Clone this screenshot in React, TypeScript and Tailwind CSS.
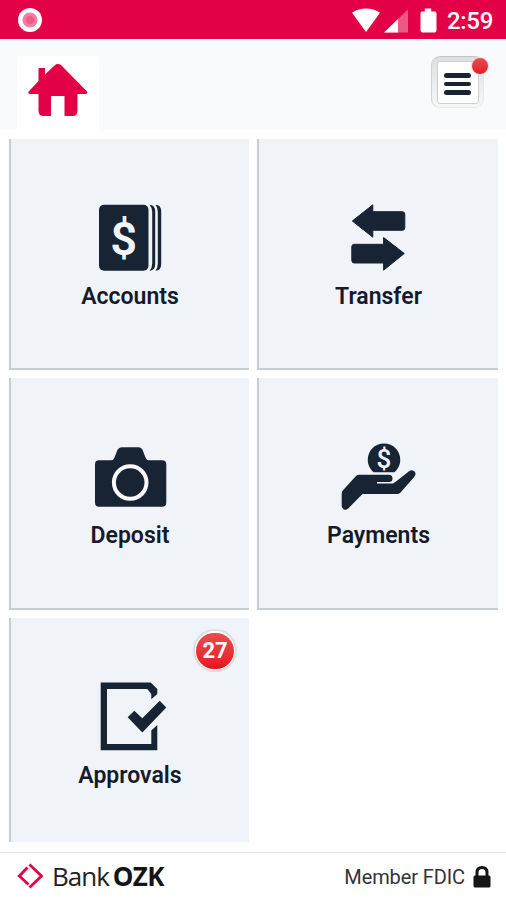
import { FunctionComponent, ReactNode } from "react";

const StatusBar: FunctionComponent = () => {
  return (
    <div className="flex h-[39px] items-center justify-between bg-[#E40046] pl-[18px] pr-[13px]">
      <svg width="24" height="24" viewBox="0 0 24 24">
        <circle cx="12" cy="12" r="12" fill="#fff" />
        <circle cx="12" cy="12" r="7.6" fill="#F27FA2" />
        <circle cx="12" cy="12" r="4.2" fill="#EE5C89" />
      </svg>
      <div className="flex items-center">
        <svg width="88" height="28" viewBox="0 0 88 28" fill="#fff">
          <path d="M2 6.8C10.5 1.2 21.500 1.200 30 6.800L16 26Z" />
          <path d="M58 3.500V26.500H34Z" opacity="0.35" />
          <path d="M48 13V26.500H34Z" />
          <path d="M72 5.500H74.800V2.500H81.200V5.500H84.500Q86.500 5.500 86.500 7.500V24.500Q86.500 26.500 84.500 26.500H72.500Q70.500 26.500 70.500 24.500V7.500Q70.500 5.500 72 5.500Z" />
        </svg>
        <span className="ml-[9px] pt-[3px] text-[24px] font-medium leading-9 tracking-[-0.3px] text-white">
          2:59
        </span>
      </div>
    </div>
  );
};

const Header: FunctionComponent = () => {
  return (
    <header className="mt-px flex h-[90px] items-end justify-between bg-[#F8FAFB] pl-[17px] pr-[22px]">
      <button className="flex h-[74px] w-[82px] justify-center rounded-t-sm bg-white pt-[7px]">
        <svg width="60" height="54" viewBox="0 0 60 54" fill="#E40046">
          <path d="M10.500 18V5H17V11.500L26.500 2.500Q30 -.3 33.500 2.500L59 28.500Q60 31 57.500 31H49.500V47.500Q49.500 53 44.500 53H36.500V33H23V53H15.500Q10.500 53 10.500 47.500V31H2Q-.500 31 .700 28.500Z" />
        </svg>
      </button>
      <button className="relative mb-[22px] flex h-[52px] w-[53px] items-center justify-center rounded-[9px] border border-[#E8E8E8] border-l-[#D2D2D2] border-t-[#C4C4C4] bg-linear-to-b from-[#DEDFDF] to-[#F6F7F7]">
        <span className="flex h-[43px] w-[42px] flex-col items-center justify-center gap-1 rounded-[3px] border border-[#CFCFCF] bg-white pt-1">
          <span className="h-[4.5px] w-[27px] rounded-full bg-[#182433]" />
          <span className="h-[4.5px] w-[27px] rounded-full bg-[#182433]" />
          <span className="h-[4.5px] w-[27px] rounded-full bg-[#182433]" />
        </span>
        <span className="absolute -right-[6px] top-0 h-[18px] w-[18px] rounded-full border border-[#F5DCDD] bg-linear-to-b from-[#E84A50] to-[#E01B28]" />
      </button>
    </header>
  );
};

const AccountsIcon: FunctionComponent = () => (
  <>
    <rect x="9" y="2.700" width="49.500" height="66" rx="5" />
    <path d="M59.500 2.700Q65.200 3 65.200 9.500V62Q65.200 68.500 59.500 68.700Q62.200 66 62.200 61.500V10Q62.200 5.500 59.500 2.700ZM65.500 2.700Q71.200 3 71.200 9.500V62Q71.200 68.500 65.500 68.700Q67.800 66 67.800 61.500V10Q67.800 5.500 65.500 2.700Z" />
    <text
      x="33.700"
      y="52.800"
      textAnchor="middle"
      fill="#F1F5F9"
      className="text-[47px] font-semibold"
    >
      $
    </text>
  </>
);

const TransferIcon: FunctionComponent = () => (
  <path
    d="M14 19L34.500 2.800V9.700H64Q66.500 9.700 66.500 12.200V25.800Q66.500 28.300 64 28.300H34.500V35.200ZM66 51.500L45.300 35.500V42.300H16Q13.500 42.300 13.500 44.800V58.500Q13.500 61 16 61H45.300V68.200Z"
    stroke="#182433"
    strokeWidth="1"
    strokeLinejoin="round"
    transform="translate(-.7 0)"
  />
);

const CameraIcon: FunctionComponent = () => (
  <>
    <path d="M9 19.300H21Q23.500 19.300 24.500 16.500L27 10Q28.500 6.300 32 6.300H48.500Q51.700 6.300 53 10L55.500 16.500Q56.500 19.300 59 19.300H72Q76.300 19.300 76.300 23.500V61.500Q76.300 65.800 72 65.800H9Q5 65.800 5 61.500V23.500Q5 19.300 9 19.300Z" />
    <circle
      cx="40.200"
      cy="41.500"
      r="16.300"
      fill="none"
      stroke="#F8FAFC"
      strokeWidth="4"
    />
  </>
);

const PaymentsIcon: FunctionComponent = () => (
  <g transform="translate(-.5 0)">
    <path d="M35 31.200A16.300 16.300 0 1 1 56 31.200Z" />
    <text
      x="45.500"
      y="27.300"
      textAnchor="middle"
      fill="#F1F5F9"
      className="text-[26px] font-medium leading-none"
    >
      $
    </text>
    <path d="M20 33.700H50.500Q54 33.700 54 37.500Q54 41 50.500 41H38.500V42.500H54.500L57.500 40.500L70.500 30.200Q74 28 76.300 30.800Q78 33.500 75.500 36.200L62 51.500Q60.500 53 58.500 53H24L9.500 67.800Q7.500 69.500 5.500 68.500Q3.200 67.500 3.200 65V52.500Q3.200 50.500 4.500 49.200L17 35.500Q18.300 33.700 20 33.700Z" />
  </g>
);

const ApprovalsIcon: FunctionComponent = () => (
  <path d="M10.700 1.500H60.700L67.300 8V13L61.300 18.300V13L57.300 8H17V63H61.300V49.500L67.300 44V69.200H10.700ZM37.700 36.300L44.300 29.700L52.300 37.300L69.700 19.700L76.300 26.500L52.300 51.500Z" />
);

interface TileProps {
  label: string;
  icon: ReactNode;
  badge?: number;
  isLast?: boolean;
}

const Tile: FunctionComponent<TileProps> = ({ label, icon, badge, isLast }) => {
  return (
    <button
      className={`relative flex flex-col items-center border-l-2 border-[#C9CCCE] bg-[#F0F4F8] pt-[63px] ${
        isLast ? "" : "border-b-2"
      }`}
    >
      <svg
        width="80"
        height="72"
        viewBox="0 0 80 72"
        fill="#182433"
        className="shrink-0 overflow-visible"
      >
        {icon}
      </svg>
      <span className="mt-[9px] text-[23px] font-semibold leading-7 text-[#151A2B]">
        {label}
      </span>
      {badge && (
        <span className="absolute right-3 top-[11px] flex h-[43px] w-[44px] items-center justify-center rounded-full border-2 border-[#DDDEDF] bg-white">
          <span className="flex h-[36px] w-[38px] items-center justify-center rounded-full bg-linear-to-b from-[#E94B50] to-[#E5101D] text-[22px] font-bold text-white">
            {badge}
          </span>
        </span>
      )}
    </button>
  );
};

const tiles: TileProps[] = [
  { label: "Accounts", icon: <AccountsIcon /> },
  { label: "Transfer", icon: <TransferIcon /> },
  { label: "Deposit", icon: <CameraIcon /> },
  { label: "Payments", icon: <PaymentsIcon /> },
  { label: "Approvals", icon: <ApprovalsIcon />, badge: 27, isLast: true },
];

const Footer: FunctionComponent = () => {
  return (
    <footer className="mt-[10px] flex h-12 items-center justify-between border-t-[1.5px] border-[#E3E8EA] pl-[17px] pr-[15px]">
      <div className="flex items-center pb-0.5">
        <svg
          width="27"
          height="28"
          viewBox="0 0 27 28"
          fill="none"
          stroke="#E40046"
          strokeWidth="2.800"
        >
          <path d="M10.500 5.500L2.300 14L11.500 22.500M12.500 2.500L24.500 14L12.500 25.500" />
        </svg>
        <span className="ml-2 font-['Open_Sans'] text-[26px] font-normal leading-8 tracking-[-1px] text-[#222]">
          Bank
        </span>
        <span className="ml-1 font-['Open_Sans'] text-[26px] font-bold leading-8 tracking-[-0.7px] text-[#151515]">
          OZK
        </span>
      </div>
      <div className="flex items-center gap-2">
        <span className="text-[20px] leading-8 tracking-[-0.1px] text-[#333]">
          Member FDIC
        </span>
        <svg width="18" height="24" viewBox="0 0 18 24">
          <path
            d="M4 11V7.500Q4 2.500 9 2.500T14 7.500V11"
            fill="none"
            stroke="#151515"
            strokeWidth="3"
          />
          <rect x=".5" y="10.500" width="17" height="12" rx="1.500" fill="#151515" />
        </svg>
      </div>
    </footer>
  );
};

const App: FunctionComponent = () => {
  return (
    <div className="h-[900px] w-[506px] overflow-hidden bg-white font-['Roboto',sans-serif]">
      <StatusBar />
      <Header />
      <main className="mt-[9px] grid grid-cols-[240px_241px] grid-rows-[231px_232px_224px] gap-2 pl-[9px]">
        {tiles.map((tile) => (
          <Tile key={tile.label} {...tile} />
        ))}
      </main>
      <Footer />
    </div>
  );
};

export default App;
